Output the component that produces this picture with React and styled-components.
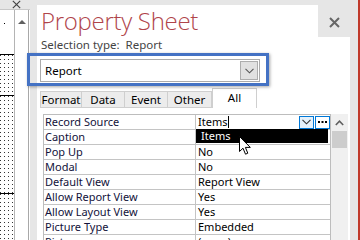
import React from 'react';
import styled, { createGlobalStyle } from 'styled-components';

const GlobalStyle = createGlobalStyle`
  html, body {
    margin: 0;
    padding: 0;
    width: 360px;
    height: 240px;
    overflow: hidden;
    background: #e6e6e6;
    font-family: 'Noto Sans', 'Open Sans', sans-serif;
  }
`;

const Screen = styled.div`
  position: relative;
  display: flex;
  width: 360px;
  height: 240px;
  background: #e6e6e6;
  overflow: hidden;
`;

/* left: report design surface */
const LeftPane = styled.div`
  width: 30px;
  display: flex;
  flex-direction: column;
`;

const LeftTop = styled.div`
  height: 18px;
  display: flex;
  justify-content: flex-end;
  align-items: center;
  padding-right: 9px;
`;

const DesignArea = styled.div`
  flex: 1;
  display: flex;
  background: #fff;
  border-top: 1px solid #c8c8c8;
`;

const Canvas = styled.div`
  width: 14px;
  display: flex;
  flex-direction: column;
  border-right: 1px solid #b4b4b4;
`;

const Ruler = styled.div`
  height: 44px;
  position: relative;
  &::after {
    content: '';
    position: absolute;
    left: 4px;
    top: 13px;
    width: 1px;
    height: 1px;
    background: #000;
  }
`;

const Section = styled.div`
  height: ${(p) => p.$h}px;
  border-top: 1px solid #000;
  background-image: linear-gradient(to right, #fff 3px, transparent 3px),
    linear-gradient(to bottom, #fff 3px, #333 3px);
  background-size: 4px 4px;
  background-position: 1px 1px;
`;

const VScroll = styled.div`
  width: 13px;
  border-right: 1px solid #a8a8a8;
  background: #fff;
  display: flex;
  justify-content: center;
  padding-top: 10px;
`;

const UpTriangle = styled.div`
  width: 0;
  height: 0;
  border-left: 4px solid transparent;
  border-right: 4px solid transparent;
  border-bottom: 4px solid #606060;
`;

/* property sheet */
const Sheet = styled.div`
  margin-left: 7px;
  margin-top: 5px;
  width: 313px;
  display: flex;
  flex-direction: column;
`;

const Header = styled.div`
  display: flex;
  height: 32px;
`;

const TitleArea = styled.div`
  flex: 1;
  background: #fff;
  padding-left: 4px;
`;

const Title = styled.div`
  font-family: 'Open Sans', 'Noto Sans', sans-serif;
  font-weight: 300;
  font-size: 24px;
  line-height: 32px;
  color: #b0444a;
  letter-spacing: -0.3px;
`;

const CloseArea = styled.div`
  width: 32px;
  display: flex;
  justify-content: center;
  align-items: center;
  padding-top: 3px;
`;

const Body = styled.div`
  flex: 1;
  background: #fff;
  padding: 0 0 0 3px;
  display: flex;
  flex-direction: column;
  font-size: 11px;
`;

const SelectionType = styled.div`
  height: 16px;
  line-height: 16px;
  padding-left: 1px;
  font-size: 11.5px;
  color: #444;
  span {
    margin-left: 6px;
  }
`;

const Combo = styled.div`
  margin-top: 6px;
  width: 213px;
  height: 21px;
  border: 1px solid #ababab;
  display: flex;
  align-items: center;
  justify-content: space-between;
  padding: 0 1px 0 4px;
  font-size: 11.5px;
  color: #000;
`;

const ComboButton = styled.div`
  width: 16px;
  height: 17px;
  background: #e1e1e1;
  border: 1px solid #adadad;
  display: flex;
  align-items: center;
  justify-content: center;
`;

const TabStrip = styled.div`
  margin-top: 6px;
  display: flex;
  align-items: flex-end;
  height: 20px;
`;

const Tab = styled.div`
  width: ${(p) => p.$w}px;
  height: ${(p) => (p.$active ? 20 : 17)}px;
  background: ${(p) => (p.$active ? '#fff' : '#ececec')};
  border: 1px solid #cfcfcf;
  border-bottom: ${(p) => (p.$active ? 'none' : '1px solid #cfcfcf')};
  border-left: ${(p) => (p.$first || p.$active ? '1px solid #cfcfcf' : 'none')};
  display: flex;
  justify-content: center;
  align-items: ${(p) => (p.$active ? 'flex-start' : 'center')};
  padding-top: ${(p) => (p.$active ? 1 : 0)}px;
  box-sizing: border-box;
  color: #000;
  font-size: 11.5px;
  line-height: 15px;
`;

const GridWrap = styled.div`
  margin-top: 6px;
  margin-left: 3px;
  display: flex;
  flex: 1;
  position: relative;
`;

const Grid = styled.div`
  width: 286px;
  border-top: 1px solid #bdbdbd;
  border-left: 1px solid #bdbdbd;
  border-right: 1px solid #bdbdbd;
`;

const Row = styled.div`
  display: grid;
  grid-template-columns: 152px 1fr;
  height: 15px;
  border-bottom: 1px solid #c4c4c4;
  box-sizing: border-box;
`;

const Label = styled.div`
  padding-left: 1px;
  line-height: 14px;
  color: #12123a;
  border-right: 1px solid #c4c4c4;
  white-space: nowrap;
  overflow: hidden;
`;

const Value = styled.div`
  padding-left: 2px;
  line-height: 14px;
  color: #000;
  display: flex;
  align-items: center;
  position: relative;
`;

const Caret = styled.span`
  width: 1px;
  height: 12px;
  background: #000;
  margin-left: 1px;
`;

const CellButtons = styled.div`
  margin-left: auto;
  display: flex;
  gap: 1px;
`;

const CellButton = styled.div`
  width: 15px;
  height: 13px;
  border: 1px solid #0078d7;
  background: ${(p) => (p.$light ? '#e5f1fb' : '#fff')};
  box-sizing: border-box;
  display: flex;
  align-items: center;
  justify-content: center;
`;

const DropList = styled.div`
  position: absolute;
  left: 153px;
  top: 15px;
  width: 132px;
  height: 14px;
  background: #000;
  color: #fff;
  line-height: 14px;
  padding-left: 5px;
  box-sizing: border-box;
  z-index: 2;
`;

const Scroll = styled.div`
  width: 17px;
  background: #f0f0f0;
  display: flex;
  flex-direction: column;
  align-items: center;
  border-right: 1px solid #fff;
`;

const ScrollArrow = styled.div`
  height: 17px;
  display: flex;
  align-items: center;
  justify-content: center;
`;

const Thumb = styled.div`
  width: 15px;
  height: 17px;
  background: #cdcdcd;
`;

const Margin = styled.div`
  width: 8px;
  background: #e6e6e6;
`;

const RedEdge = styled.div`
  width: 2px;
  background: #c0392b;
`;

const Highlight = styled.div`
  position: absolute;
  left: 27px;
  top: 53px;
  width: 242px;
  height: 33px;
  border: 3px solid #4472c4;
  box-sizing: border-box;
  box-shadow: 1px 1px 3px rgba(0, 0, 0, 0.35);
  pointer-events: none;
`;

const Pointer = styled.svg`
  position: absolute;
  left: 239px;
  top: 136px;
  z-index: 3;
`;

const rows = [
  ['Record Source', 'Items'],
  ['Caption', ''],
  ['Pop Up', 'No'],
  ['Modal', 'No'],
  ['Default View', 'Report View'],
  ['Allow Report View', 'Yes'],
  ['Allow Layout View', 'Yes'],
  ['Picture Type', 'Embedded'],
  ['Picture', '(none)'],
];

const tabs = [
  ['Format', 42],
  ['Data', 43],
  ['Event', 43],
  ['Other', 44],
  ['All', 45],
];

function Chevron({ color = '#333' }) {
  return (
    <svg width="9" height="6" viewBox="0 0 9 6">
      <path d="M0.5 0.8 L4.5 4.8 L8.5 0.8" fill="none" stroke={color} strokeWidth="1.1" />
    </svg>
  );
}

function Cross({ size, color, width }) {
  return (
    <svg width={size} height={size} viewBox="0 0 11 11">
      <path d="M1 1 L10 10 M10 1 L1 10" stroke={color} strokeWidth={width} />
    </svg>
  );
}

export default function App() {
  return (
    <Screen>
      <GlobalStyle />
      <LeftPane>
        <LeftTop>
          <Cross size={9} color="#444" width={1.4} />
        </LeftTop>
        <DesignArea>
          <Canvas>
            <Ruler />
            <Section $h={40} />
            <Section $h={97} />
            <Section $h={60} />
          </Canvas>
          <VScroll>
            <UpTriangle />
          </VScroll>
        </DesignArea>
      </LeftPane>

      <Sheet>
        <Header>
          <TitleArea>
            <Title>Property Sheet</Title>
          </TitleArea>
          <CloseArea>
            <Cross size={11} color="#666" width={2} />
          </CloseArea>
        </Header>
        <Body>
          <SelectionType>
            Selection type:<span>Report</span>
          </SelectionType>
          <Combo>
            Report
            <ComboButton>
              <Chevron color="#555" />
            </ComboButton>
          </Combo>
          <TabStrip>
            {tabs.map(([t, w], i) => (
              <Tab key={t} $w={w} $first={i === 0} $active={t === 'All'}>
                {t}
              </Tab>
            ))}
          </TabStrip>
          <GridWrap>
            <Grid>
              {rows.map(([label, value], i) => (
                <Row key={label}>
                  <Label>{label}</Label>
                  <Value>
                    {value}
                    {i === 0 && (
                      <>
                        <Caret />
                        <CellButtons>
                          <CellButton $light>
                            <Chevron color="#333" />
                          </CellButton>
                          <CellButton>
                            <svg width="9" height="3" viewBox="0 0 9 3">
                              <rect x="0" y="0" width="2" height="2" fill="#000" />
                              <rect x="3.5" y="0" width="2" height="2" fill="#000" />
                              <rect x="7" y="0" width="2" height="2" fill="#000" />
                            </svg>
                          </CellButton>
                        </CellButtons>
                      </>
                    )}
                  </Value>
                </Row>
              ))}
            </Grid>
            <DropList>Items</DropList>
            <Scroll>
              <ScrollArrow>
                <svg width="9" height="6" viewBox="0 0 9 6">
                  <path d="M0.8 5 L4.5 1.2 L8.2 5" fill="none" stroke="#606060" strokeWidth="1.6" />
                </svg>
              </ScrollArrow>
              <Thumb />
            </Scroll>
          </GridWrap>
        </Body>
      </Sheet>
      <Margin />
      <RedEdge />

      <Highlight />
      <Pointer width="13" height="20" viewBox="0 0 13 20">
        <path
          d="M0.5 0.5 L0.5 15.5 L4 12.2 L6.5 18.2 L8.8 17.2 L6.4 11.4 L11.3 11.4 Z"
          fill="#fff"
          stroke="#000"
          strokeWidth="1"
          strokeLinejoin="round"
        />
      </Pointer>
    </Screen>
  );
}
